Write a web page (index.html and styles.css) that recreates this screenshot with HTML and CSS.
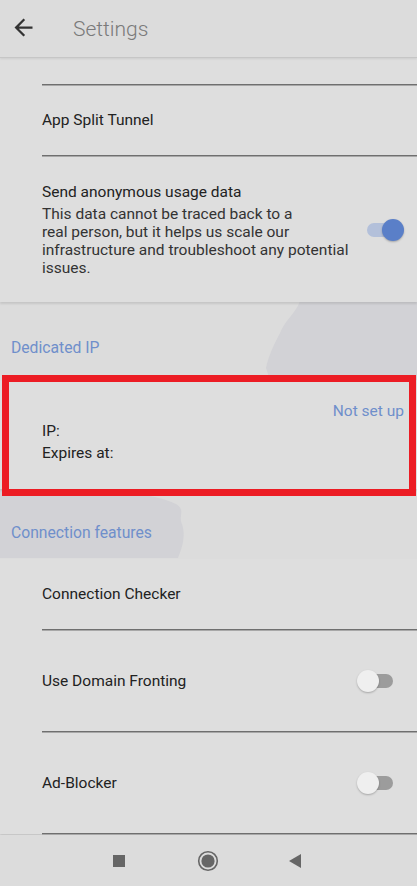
FILE: index.html
```html
<!DOCTYPE html>
<html lang="en">
<head>
    <meta charset="UTF-8">
    <meta name="viewport" content="width=device-width, initial-scale=1.0">
    <title>Settings</title>
    <link rel="stylesheet" href="styles.css">
</head>
<body>
    <div class="app">
        <header class="topbar">
            <svg class="back" viewBox="0 0 24 24" width="27" height="27">
                <path d="M20 11H7.83l5.59-5.59L12 4l-8 8 8 8 1.41-1.41L7.83 13H20v-2z" fill="#333"/>
            </svg>
            <span class="title">Settings</span>
        </header>

        <main class="scroll">
            <!-- faded world map behind the list -->
            <svg class="map" width="417" height="800" viewBox="0 0 417 800">
                <path d="M300 243 C 296 255, 285 262, 280 275 C 272 290, 268 300, 266 310 L 270 322 L 417 322 L 417 243 Z" fill="#d2d2d6"/>
                <path d="M0 430 L 0 500 L 178 500 C 182 490, 186 478, 182 466 C 178 458, 186 452, 176 446 C 164 440, 150 438, 138 436 C 126 432, 110 430, 0 430 Z" fill="#d2d2d6"/>
            </svg>

            <section class="card">
                <div class="item item-tail"></div>
                <div class="item item-short">App Split Tunnel</div>
                <div class="item item-tall">
                    <div class="text">
                        <div class="label">Send anonymous usage data</div>
                        <div class="desc">This data cannot be traced back to a<br>real person, but it helps us scale our<br>infrastructure and troubleshoot any potential<br>issues.</div>
                    </div>
                    <span class="switch on"><span class="thumb"></span></span>
                </div>
            </section>

            <h3 class="group group-ip">Dedicated IP</h3>

            <section class="card card-ip">
                <div class="status">Not set up</div>
                <div class="ip-line">IP:</div>
                <div class="ip-line">Expires at:</div>
            </section>

            <h3 class="group group-conn">Connection features</h3>

            <section class="card card-last">
                <div class="item item-short">Connection Checker</div>
                <div class="item item-toggle">
                    <span>Use Domain Fronting</span>
                    <span class="switch"><span class="thumb"></span></span>
                </div>
                <div class="item item-toggle">
                    <span>Ad-Blocker</span>
                    <span class="switch"><span class="thumb"></span></span>
                </div>
            </section>
        </main>

        <nav class="navbar">
            <span class="nav-square"></span>
            <svg width="22" height="22" viewBox="0 0 22 22">
                <circle cx="11" cy="11" r="9.3" fill="none" stroke="#666" stroke-width="1.6"/>
                <circle cx="11" cy="11" r="6.6" fill="#666"/>
            </svg>
            <svg width="16" height="16" viewBox="0 0 16 16">
                <path d="M14 1 L14 15 L2 8 Z" fill="#666"/>
            </svg>
        </nav>
    </div>
</body>
</html>
```
FILE: styles.css
```css
body{
    margin: 0;
    background-color: #dcdcdc;
    font-family: Roboto, "Liberation Sans", sans-serif;
    color: #222;
}
.app{
    width: 417px;
    height: 886px;
    display: flex;
    flex-direction: column;
    overflow: hidden;
}
.topbar{
    height: 57px;
    flex: none;
    display: flex;
    align-items: center;
    border-bottom: 1px solid #c6c6c6;
    box-shadow: 0 1px 2px rgba(0,0,0,0.08);
    position: relative;
    z-index: 2;
}
.back{
    margin-left: 10px;
    margin-top: -2px;
}
.title{
    margin-left: 36px;
    font-size: 21px;
    font-weight: 300;
    color: #7a7a7a;
}
.scroll{
    flex: 1;
    position: relative;
    overflow: hidden;
}
.map{
    position: absolute;
    left: 0;
    top: 0;
    z-index: 0;
}
.card{
    position: relative;
    z-index: 1;
    background-color: #dedede;
    box-shadow: 0 2px 2px rgba(0,0,0,0.1);
}
.item{
    margin-left: 42px;
    border-bottom: 1px solid #6f6f6f;
    box-shadow: 0 1px 0 #a8a8a8;
    font-size: 15.5px;
    display: flex;
    align-items: center;
    justify-content: space-between;
}
.item-tail{
    height: 26px;
}
.item-short{
    height: 70px;
}
.item-tall{
    border-bottom: none;
    box-shadow: none;
    padding: 27px 16px 25px 0;
}
.item-toggle{
    height: 101px;
    padding-right: 24px;
}
.label{
    line-height: 18px;
    margin-bottom: 4px;
}
.desc{
    line-height: 18px;
    white-space: nowrap;
    color: #333;
}
.switch{
    position: relative;
    width: 34px;
    height: 14px;
    border-radius: 7px;
    background-color: #9c9c9c;
}
.thumb{
    position: absolute;
    top: -4px;
    left: -2px;
    width: 22px;
    height: 22px;
    border-radius: 50%;
    background-color: #efefef;
    box-shadow: 0 1px 2px rgba(0,0,0,0.25);
}
.switch.on{
    width: 30px;
    margin-right: 4px;
    background-color: #b3c0da;
}
.switch.on .thumb{
    left: auto;
    right: -7px;
    background-color: #5a7fc8;
}
.group{
    position: relative;
    z-index: 1;
    margin: 0;
    padding-left: 11px;
    font-size: 15.7px;
    font-weight: 400;
    line-height: 18px;
    color: #6f8fcb;
}
.group-ip{
    padding-top: 37px;
    padding-bottom: 24px;
}
.group-conn{
    padding-top: 35px;
    padding-bottom: 17px;
}
.card-ip{
    height: 108px;
    box-sizing: border-box;
    padding: 21px 13px 0 42px;
    font-size: 15.5px;
}
.card-ip::after{
    content: "";
    position: absolute;
    left: 2px;
    right: 1px;
    top: -6px;
    bottom: -7px;
    border: 7px solid #ec1c24;
}
.status{
    text-align: right;
    line-height: 18px;
    color: #6f8fcb;
}
.ip-line{
    line-height: 22px;
}
.navbar{
    height: 51px;
    flex: none;
    display: flex;
    align-items: center;
    background-color: #dcdcdc;
    padding-left: 113px;
    position: relative;
    z-index: 2;
}
.nav-square{
    width: 12px;
    height: 12px;
    background-color: #666;
    margin-right: 72px;
}
.navbar svg:nth-of-type(1){
    margin-right: 68px;
}
```
